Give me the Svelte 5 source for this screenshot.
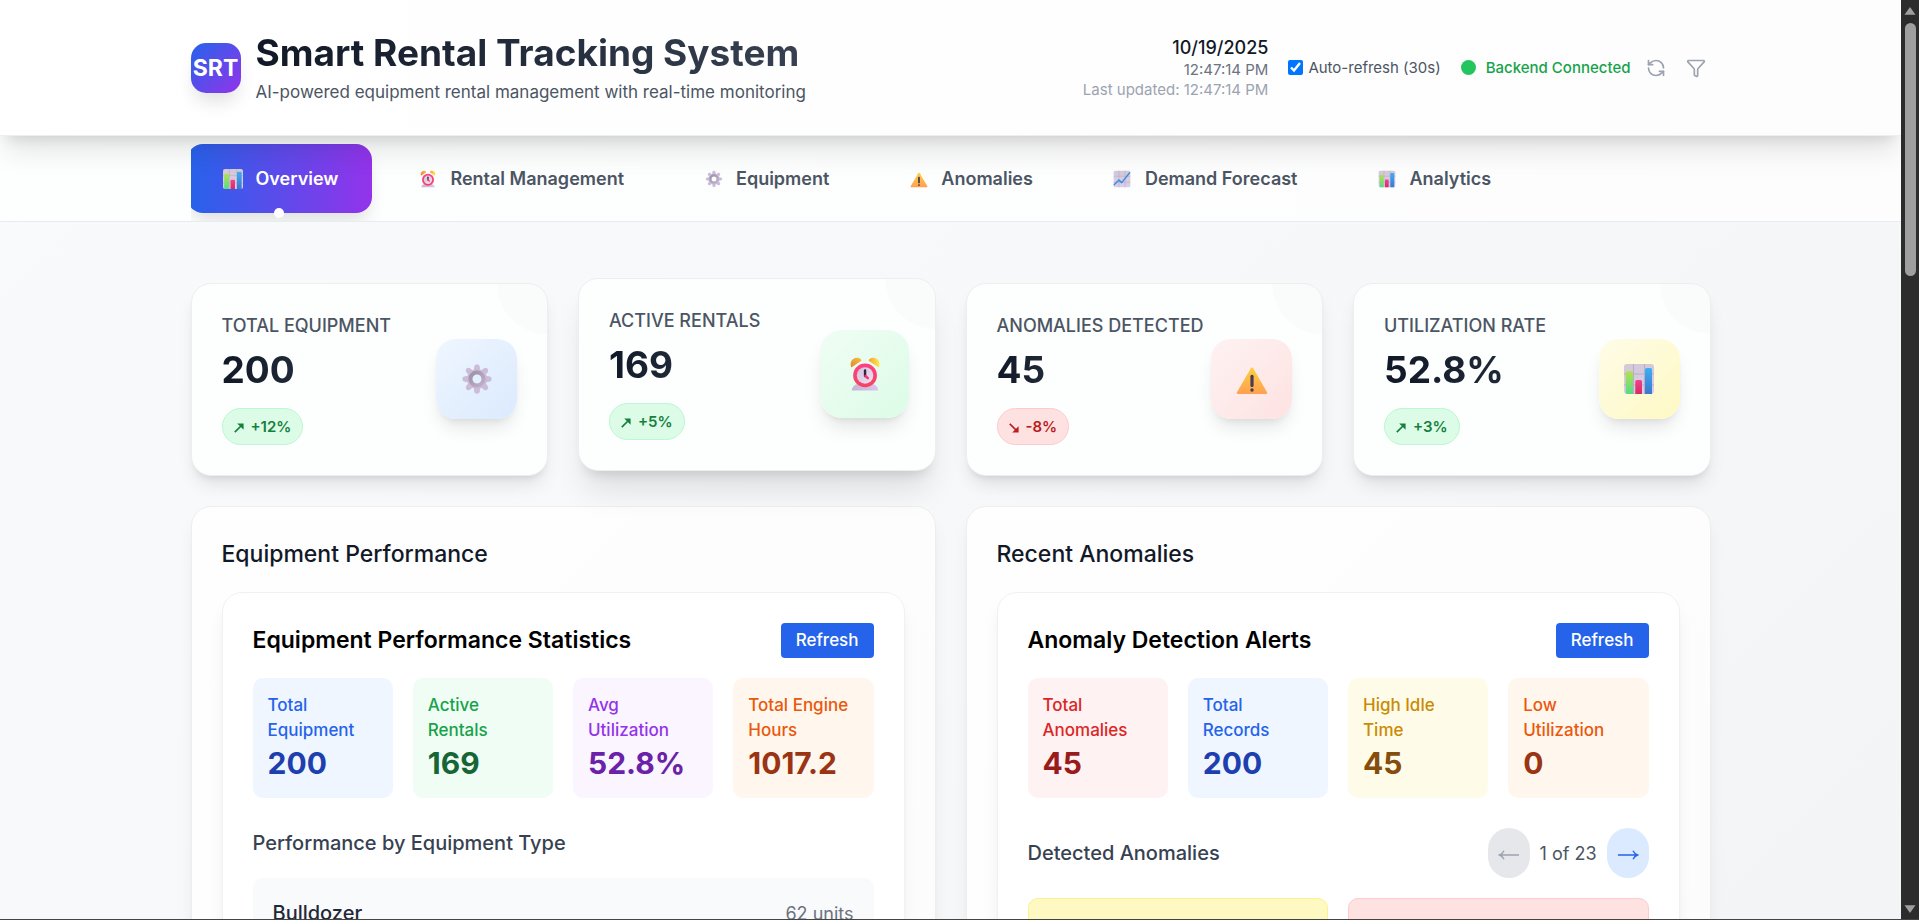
<script>
  const tabs = [
    { icon: 'bars', label: 'Overview' },
    { icon: 'clock', label: 'Rental Management' },
    { icon: 'gear', label: 'Equipment' },
    { icon: 'warning', label: 'Anomalies' },
    { icon: 'trend', label: 'Demand Forecast' },
    { icon: 'bars', label: 'Analytics' }
  ];
  let activeTab = $state('Overview');
  let autoRefresh = $state(true);

  const metrics = [
    { label: 'Total Equipment', value: '200', change: '+12%', up: true, icon: 'gear', tone: 'blue' },
    { label: 'Active Rentals', value: '169', change: '+5%', up: true, icon: 'clock', tone: 'green', raised: true },
    { label: 'Anomalies Detected', value: '45', change: '-8%', up: false, icon: 'warning', tone: 'red' },
    { label: 'Utilization Rate', value: '52.8%', change: '+3%', up: true, icon: 'bars', tone: 'yellow' }
  ];

  const performance = [
    { label: 'Total Equipment', value: '200', tone: 'blue' },
    { label: 'Active Rentals', value: '169', tone: 'green' },
    { label: 'Avg Utilization', value: '52.8%', tone: 'purple' },
    { label: 'Total Engine Hours', value: '1017.2', tone: 'orange' }
  ];

  const alerts = [
    { label: 'Total Anomalies', value: '45', tone: 'red' },
    { label: 'Total Records', value: '200', tone: 'blue' },
    { label: 'High Idle Time', value: '45', tone: 'yellow' },
    { label: 'Low Utilization', value: '0', tone: 'orange' }
  ];
</script>

{#snippet pictogram(name)}
  <svg class="pictogram" viewBox="0 0 36 36" aria-hidden="true">
    {#if name === 'bars' || name === 'trend'}
      <rect x="3" y="3" width="30" height="30" rx="3" fill="url(#paper)" />
      <path d="M12.5 3v30M23.5 3v30M3 13h30M3 24h30" stroke="#b9aec4" stroke-width="1.1" />
      {#if name === 'bars'}
        <path d="M4.7 12.3a2 2 0 0 1 2-2H10a2 2 0 0 1 2 2V33H6a1.3 1.3 0 0 1-1.3-1.3z" fill="url(#lime)" />
        <path d="M14.3 20.5a1.5 1.5 0 0 1 1.5-1.5h3.7a1.5 1.5 0 0 1 1.5 1.5V33h-6.7z" fill="url(#pink)" />
        <path d="M24 8.5A1.5 1.5 0 0 1 25.5 7h4A1.5 1.5 0 0 1 31 8.5V33h-7z" fill="url(#sky)" />
      {:else}
        <path d="M4 28.5L12.5 20l5 4.500L31.5 7" fill="none" stroke="#2f8fe0" stroke-width="2.6" stroke-linecap="round" stroke-linejoin="round" />
      {/if}
    {:else if name === 'gear'}
      {#each [0, 45, 90, 135, 180, 225, 270, 315] as angle}
        <path d="M14.8 10.500L15.2 5.800Q15.500 3.300 18 3.300Q20.500 3.300 20.800 5.800L21.200 10.500z" fill="url(#lilac)" transform="rotate({angle} 18 18)" />
      {/each}
      <circle cx="18" cy="18" r="7.600" fill="none" stroke="#cbbbd8" stroke-width="5" />
      <circle cx="18" cy="18" r="6.500" fill="none" stroke="url(#steel)" stroke-width="4" />
    {:else if name === 'clock'}
      <path d="M6.5 33q-.8 0-.5-1 1.500-5 6-5h12q4.500 0 6 5 .3 1-.5 1z" fill="url(#base)" />
      <path d="M5.5 12C3.500 7.500 6.500 3.500 10.500 3.300c2.500-.1 4.200 1.200 4.200 2.700z" fill="url(#bellLeft)" />
      <path d="M30.5 12C32.500 7.500 29.500 3.500 25.500 3.300c-2.500-.1-4.200 1.200-4.200 2.700z" fill="url(#bellRight)" />
      <circle cx="18" cy="19.300" r="10.800" fill="url(#rim)" />
      <circle cx="18" cy="19.300" r="7.500" fill="url(#face)" />
      <path d="M18 14.800v5" stroke="#33233f" stroke-width="2.200" stroke-linecap="round" />
      <path d="M18.300 19.800l2.200 2" stroke="#f5365f" stroke-width="2.200" stroke-linecap="round" />
    {:else}
      <path d="M16.700 7.600q1.300-2 2.600 0L33 31.200q.8 1.800-1 1.800H4q-1.800 0-1-1.800z" fill="url(#amber)" />
      <rect x="16.400" y="13.800" width="3.200" height="12.200" rx="1.500" fill="#4a3b52" />
      <circle cx="18" cy="29" r="1.700" fill="#4a3b52" />
    {/if}
  </svg>
{/snippet}

{#snippet tiles(items)}
  <div class="tiles">
    {#each items as item}
      <div class="tile {item.tone}">
        <p>{item.label}</p>
        <strong>{item.value}</strong>
      </div>
    {/each}
  </div>
{/snippet}

<svg class="defs" width="0" height="0" aria-hidden="true">
  <defs>
    <linearGradient id="paper" x1="0" y1="0" x2="0" y2="1"><stop offset="0" stop-color="#d3c9d8" /><stop offset="1" stop-color="#dccdec" /></linearGradient>
    <linearGradient id="lime" x1="0" y1="0" x2="0" y2="1"><stop offset="0" stop-color="#b5e04c" /><stop offset="1" stop-color="#55dc88" /></linearGradient>
    <linearGradient id="pink" x1="0" y1="0" x2="0" y2="1"><stop offset="0" stop-color="#f0438c" /><stop offset="1" stop-color="#d92a60" /></linearGradient>
    <linearGradient id="sky" x1="0" y1="0" x2="0" y2="1"><stop offset="0" stop-color="#3daef5" /><stop offset="1" stop-color="#3b78cf" /></linearGradient>
    <linearGradient id="lilac" x1="0" y1="0" x2="0" y2="1"><stop offset="0" stop-color="#ccbade" /><stop offset="1" stop-color="#cbbfd2" /></linearGradient>
    <linearGradient id="steel" x1="0" y1="0" x2="1" y2="1"><stop offset="0" stop-color="#9d92a4" /><stop offset="1" stop-color="#c0b0cc" /></linearGradient>
    <linearGradient id="base" x1="0" y1="0" x2="1" y2="0"><stop offset="0" stop-color="#c5b6d3" /><stop offset="1" stop-color="#dcc3f2" /></linearGradient>
    <linearGradient id="bellLeft" x1="0" y1="1" x2="1" y2="0"><stop offset="0" stop-color="#d98a35" /><stop offset="1" stop-color="#ffbd3c" /></linearGradient>
    <linearGradient id="bellRight" x1="0" y1="0" x2="1" y2="0"><stop offset="0" stop-color="#f5a33a" /><stop offset="1" stop-color="#ffe94c" /></linearGradient>
    <linearGradient id="rim" x1="0" y1="0" x2="0" y2="1"><stop offset="0" stop-color="#ff3f86" /><stop offset="1" stop-color="#f5455c" /></linearGradient>
    <linearGradient id="face" x1="0" y1="0" x2="1" y2="1"><stop offset="0" stop-color="#cfc3da" /><stop offset="1" stop-color="#f2def8" /></linearGradient>
    <linearGradient id="amber" x1="0" y1="0" x2="0" y2="1"><stop offset="0" stop-color="#fbd03f" /><stop offset="1" stop-color="#ffa052" /></linearGradient>
  </defs>
</svg>

<div class="window">
  <div class="page">
    <header>
      <div class="container topbar">
        <div class="brand">
          <div class="logo">SRT</div>
          <div>
            <h1>Smart Rental Tracking System</h1>
            <p>AI-powered equipment rental management with real-time monitoring</p>
          </div>
        </div>
        <div class="status">
          <div class="stamp">
            <span class="date">10/19/2025</span>
            <span class="time">12:47:14 PM</span>
            <span class="updated">Last updated: 12:47:14 PM</span>
          </div>
          <label class="auto">
            <input type="checkbox" bind:checked={autoRefresh} />
            Auto-refresh (30s)
          </label>
          <div class="backend"><i></i>Backend Connected</div>
          <div class="tools">
            <button aria-label="Refresh data">
              <svg viewBox="0 0 24 24"><path d="M21 12a9 9 0 0 0-9-9 9.750 9.750 0 0 0-6.740 2.740L3 8" /><path d="M3 3v5h5" /><path d="M3 12a9 9 0 0 0 9 9 9.750 9.750 0 0 0 6.740-2.740L21 16" /><path d="M16 16h5v5" /></svg>
            </button>
            <button aria-label="Filter">
              <svg viewBox="0 0 24 24"><path d="M10 20a1 1 0 0 0 .553.895l2 1A1 1 0 0 0 14 21v-7a2 2 0 0 1 .517-1.341L21.740 4.670A1 1 0 0 0 21 3H3a1 1 0 0 0-.742 1.670l7.225 7.989A2 2 0 0 1 10 14z" /></svg>
            </button>
          </div>
        </div>
      </div>
    </header>

    <nav>
      <div class="container">
        <div class="tabs">
          {#each tabs as tab}
            <button class:active={activeTab === tab.label} onclick={() => (activeTab = tab.label)}>
              <span class="tab-icon">{@render pictogram(tab.icon)}</span>
              <span>{tab.label}</span>
            </button>
          {/each}
        </div>
      </div>
    </nav>

    <main class="container">
      <section class="metrics">
        {#each metrics as metric}
          <article class="metric" class:raised={metric.raised}>
            <div>
              <h2>{metric.label}</h2>
              <p class="value">{metric.value}</p>
              <span class="badge" class:down={!metric.up}>
                <svg viewBox="0 0 10 10" aria-hidden="true">
                  {#if metric.up}
                    <path class="stem" d="M.8 9.200L7.500 2.500" /><path d="M3.200 .4H9.600V6.800L7.800 5 5 2.200z" />
                  {:else}
                    <path class="stem" d="M.8 .8L7.500 7.500" /><path d="M3.200 9.600H9.600V3.200L7.800 5 5 7.800z" />
                  {/if}
                </svg>
                {metric.change}
              </span>
            </div>
            <div class="metric-icon {metric.tone}">{@render pictogram(metric.icon)}</div>
          </article>
        {/each}
      </section>

      <section class="panels">
        <article class="panel">
          <h2>Equipment Performance</h2>
          <div class="inner">
            <div class="inner-head">
              <h3>Equipment Performance Statistics</h3>
              <button class="refresh">Refresh</button>
            </div>
            {@render tiles(performance)}
            <h4>Performance by Equipment Type</h4>
            <div class="type-row">
              <span class="type-name">Bulldozer</span>
              <span class="type-units">62 units</span>
            </div>
          </div>
        </article>

        <article class="panel">
          <h2>Recent Anomalies</h2>
          <div class="inner">
            <div class="inner-head">
              <h3>Anomaly Detection Alerts</h3>
              <button class="refresh">Refresh</button>
            </div>
            {@render tiles(alerts)}
            <div class="pager-row">
              <h4>Detected Anomalies</h4>
              <div class="pager">
                <button disabled aria-label="Previous page">
                  <svg viewBox="0 0 22 12"><path d="M21 6H1.500M6 1.800Q4.500 5 1.500 6 4.500 7 6 10.200" /></svg>
                </button>
                <span>1 of 23</span>
                <button aria-label="Next page">
                  <svg viewBox="0 0 22 12"><path d="M1 6h19.500M16 1.800Q17.500 5 20.500 6 17.500 7 16 10.200" /></svg>
                </button>
              </div>
            </div>
            <div class="alerts">
              <div class="alert yellow"></div>
              <div class="alert red"></div>
            </div>
          </div>
        </article>
      </section>
    </main>
  </div>

  <div class="scrollbar" aria-hidden="true">
    <svg viewBox="0 0 12 10"><path d="M6 1L11.500 8.800H.5z" /></svg>
    <div class="track"><div class="thumb"></div></div>
    <svg viewBox="0 0 12 10"><path d="M6 9L.5 1.200h11z" /></svg>
  </div>
</div>

<style>
  :global(body) {
    margin: 0;
    font-family: Inter, "Liberation Sans", sans-serif;
    color: #111827;
  }
  h1, h2, h3, h4, p { margin: 0; }
  button {
    font: inherit;
    border: 0;
    padding: 0;
    background: none;
    cursor: pointer;
  }
  .defs { position: absolute; }

  .window {
    display: flex;
    height: 100vh;
    box-sizing: border-box;
    overflow: hidden;
    border-bottom: 1px solid #444;
  }
  .page {
    flex: 1;
    min-width: 0;
    overflow: hidden;
    background: linear-gradient(135deg, #f8fafc, #f7f8fa 50%, #f3f4f6);
  }
  .container {
    max-width: 1520px;
    margin: 0 auto;
    padding: 0 40px;
  }

  header {
    position: relative;
    z-index: 2;
    background: linear-gradient(90deg, #fff, #fdfdfe);
    border-bottom: 1px solid #eceef0;
    box-shadow: 0 20px 26px -5px rgba(0, 0, 0, 0.1), 0 10px 12px -7px rgba(0, 0, 0, 0.1);
  }
  .topbar {
    display: flex;
    align-items: center;
    justify-content: space-between;
    padding-top: 30px;
    padding-bottom: 30px;
  }
  .brand {
    display: flex;
    align-items: center;
    gap: 15px;
  }
  .logo {
    display: grid;
    place-items: center;
    width: 50px;
    height: 50px;
    border-radius: 15px;
    background: linear-gradient(135deg, #2563eb, #9333ea);
    box-shadow: 0 12px 18px -4px rgba(0, 0, 0, 0.12);
    color: #fff;
    font-size: 23px;
    font-weight: 700;
  }
  h1 {
    font-size: 37px;
    line-height: 45px;
    font-weight: 700;
    background: linear-gradient(90deg, #111827, #374151);
    background-clip: text;
    color: transparent;
  }
  .brand p {
    margin-top: 5px;
    font-size: 17px;
    line-height: 25px;
    color: #4b5563;
  }
  .status {
    display: flex;
    align-items: center;
    gap: 20px;
    font-size: 15px;
    line-height: 20px;
  }
  .stamp {
    display: flex;
    flex-direction: column;
    text-align: right;
  }
  .date {
    font-size: 18px;
    line-height: 25px;
    font-weight: 500;
  }
  .time { color: #6b7280; }
  .updated { color: #9ca3af; }
  .auto {
    display: flex;
    align-items: center;
    gap: 5px;
    color: #4b5563;
  }
  .auto input {
    width: 15px;
    height: 15px;
    margin: 0;
    accent-color: #0075ff;
  }
  .backend {
    display: flex;
    align-items: center;
    gap: 10px;
    color: #16a34a;
    font-weight: 500;
  }
  .backend i {
    width: 15px;
    height: 15px;
    border-radius: 50%;
    background: #22c55e;
  }
  .tools {
    display: flex;
    gap: 10px;
    margin-left: -10px;
  }
  .tools button {
    display: flex;
    padding: 5px;
  }
  .tools svg {
    width: 20px;
    height: 20px;
    fill: none;
    stroke: #9ca3af;
    stroke-width: 2;
    stroke-linecap: round;
    stroke-linejoin: round;
  }

  nav {
    background: linear-gradient(90deg, #fdfefe, #fdfdfe);
    border-bottom: 1px solid #e8ebef;
  }
  .tabs {
    display: flex;
    gap: 17px;
    padding: 10px 0;
    overflow: hidden;
  }
  .tabs button {
    position: relative;
    z-index: 0;
    display: flex;
    align-items: center;
    gap: 10px;
    padding: 20px 30px;
    font-size: 18px;
    line-height: 25px;
    font-weight: 600;
    color: #4b5563;
    white-space: nowrap;
  }
  .tab-icon {
    display: grid;
    place-items: center;
    width: 25px;
  }
  .tab-icon :global(svg) {
    width: 20px;
    height: 20px;
  }
  .tabs .active { color: #fff; }
  .tabs .active :global(svg) {
    width: 24px;
    height: 24px;
  }
  .tabs .active::before {
    content: "";
    position: absolute;
    z-index: -1;
    inset: -2px -4px;
    border-radius: 16px;
    background: linear-gradient(90deg, #2563eb, #9333ea);
    box-shadow: 0 12px 18px -4px rgba(0, 0, 0, 0.12);
  }
  .tabs .active::after {
    content: "";
    position: absolute;
    left: calc(50% - 5px);
    bottom: -7px;
    width: 10px;
    height: 10px;
    border-radius: 50%;
    background: #fff;
  }

  main {
    display: grid;
    gap: 30px;
  }
  main.container {
    padding-top: 61px;
    padding-bottom: 40px;
  }
  .metrics {
    display: grid;
    grid-template-columns: repeat(4, 1fr);
    gap: 30px;
  }
  .metric {
    position: relative;
    display: flex;
    align-items: center;
    justify-content: space-between;
    overflow: hidden;
    padding: 29px 30px 30px;
    border: 1px solid #eceef0;
    border-radius: 20px;
    background: #fdfefe;
    box-shadow: 0 12px 18px -4px rgba(0, 0, 0, 0.1), 0 5px 7px -4px rgba(0, 0, 0, 0.1);
  }
  .metric::before {
    content: "";
    position: absolute;
    top: -50px;
    right: -50px;
    width: 100px;
    height: 100px;
    border-radius: 50%;
    background: rgba(0, 0, 0, 0.01);
  }
  .raised {
    transform: translateY(-5px);
    box-shadow: 0 25px 31px -6px rgba(0, 0, 0, 0.1), 0 10px 12px -7px rgba(0, 0, 0, 0.12);
  }
  .metric h2 {
    font-size: 18px;
    line-height: 25px;
    font-weight: 500;
    text-transform: uppercase;
    color: #4b5563;
  }
  .value {
    margin: 9px 0 15px;
    width: max-content;
    font-size: 37px;
    line-height: 46px;
    font-weight: 700;
    background: linear-gradient(90deg, #111827, #1f2937);
    background-clip: text;
    color: transparent;
  }
  .badge {
    display: flex;
    align-items: center;
    gap: 7px;
    width: max-content;
    padding: 7px 11px;
    border: 1px solid #bbf7d0;
    border-radius: 20px;
    background: #dcfce7;
    color: #15803d;
    font-size: 15px;
    line-height: 21px;
    font-weight: 600;
  }
  .badge svg {
    width: 10px;
    height: 10px;
    margin-top: 2px;
    fill: currentColor;
  }
  .stem {
    stroke: currentColor;
    stroke-width: 1.7;
  }
  .badge.down {
    border-color: #fecaca;
    background: #fee2e2;
    color: #b91c1c;
  }
  .metric-icon {
    position: absolute;
    right: 30px;
    display: grid;
    place-items: center;
    width: 81px;
    height: 80px;
    border-radius: 20px;
    box-shadow: 0 12px 18px -4px rgba(0, 0, 0, 0.1), 0 5px 7px -4px rgba(0, 0, 0, 0.08);
  }
  .metric-icon :global(svg) {
    width: 36px;
    height: 36px;
  }
  .raised .metric-icon { transform: scale(1.1); }
  .metric-icon.blue { background: linear-gradient(135deg, #eff6ff, #dbeafe); }
  .metric-icon.green { background: linear-gradient(135deg, #f0fdf4, #dcfce7); }
  .metric-icon.red { background: linear-gradient(135deg, #fef2f2, #fee2e2); }
  .metric-icon.yellow { background: linear-gradient(135deg, #fefce8, #fef9c3); }

  .panels {
    display: grid;
    grid-template-columns: repeat(2, 1fr);
    gap: 30px;
  }
  .panel {
    padding: 30px;
    border: 1px solid #eceef0;
    border-radius: 20px;
    background: linear-gradient(135deg, #fefefe, #fcfcfd);
    box-shadow: 0 12px 18px -4px rgba(0, 0, 0, 0.08), 0 5px 7px -4px rgba(0, 0, 0, 0.06);
  }
  .panel h2 {
    margin-bottom: 20px;
    font-size: 23px;
    line-height: 35px;
    font-weight: 500;
  }
  .inner {
    padding: 30px;
    border: 1px solid #f0f1f3;
    border-radius: 20px;
    background: #fff;
    box-shadow: 0 12px 18px -4px rgba(0, 0, 0, 0.08), 0 5px 7px -4px rgba(0, 0, 0, 0.06);
  }
  .inner-head {
    display: flex;
    align-items: center;
    justify-content: space-between;
    margin-bottom: 20px;
  }
  h3 {
    font-size: 23px;
    line-height: 35px;
    font-weight: 600;
    color: #000;
  }
  .refresh {
    padding: 5px 15px;
    border-radius: 4px;
    background: #2563eb;
    color: #fff;
    font-size: 17px;
    line-height: 25px;
    font-weight: 500;
  }
  .tiles {
    display: grid;
    grid-template-columns: repeat(4, 1fr);
    gap: 20px;
    margin-bottom: 30px;
  }
  .tile {
    padding: 15px;
    border-radius: 10px;
  }
  .tile p {
    font-size: 17px;
    line-height: 25px;
    font-weight: 500;
  }
  .tile strong {
    display: block;
    font-size: 30px;
    line-height: 40px;
    font-weight: 700;
  }
  .tile.blue { background: #eff6ff; color: #2563eb; }
  .tile.blue strong { color: #1e40af; }
  .tile.green { background: #f0fdf4; color: #16a34a; }
  .tile.green strong { color: #166534; }
  .tile.purple { background: #faf5ff; color: #9333ea; }
  .tile.purple strong { color: #6b21a8; }
  .tile.orange { background: #fff7ed; color: #ea580c; }
  .tile.orange strong { color: #9a3412; }
  .tile.red { background: #fef2f2; color: #dc2626; }
  .tile.red strong { color: #991b1b; }
  .tile.yellow { background: #fefce8; color: #ca8a04; }
  .tile.yellow strong { color: #854d0e; }
  h4 {
    font-size: 20px;
    line-height: 30px;
    font-weight: 500;
    color: #374151;
  }
  .type-row {
    display: flex;
    align-items: center;
    justify-content: space-between;
    margin-top: 20px;
    padding: 20px;
    border-radius: 10px;
    background: #f9fafb;
  }
  .type-name {
    font-size: 20px;
    line-height: 30px;
    font-weight: 500;
    color: #1f2937;
  }
  .type-units {
    font-size: 18px;
    line-height: 25px;
    color: #6b7280;
  }
  .pager-row {
    display: flex;
    align-items: center;
    justify-content: space-between;
    margin-bottom: 20px;
  }
  .pager {
    display: flex;
    align-items: center;
    gap: 10px;
    color: #4b5563;
    font-size: 18px;
  }
  .pager button {
    display: grid;
    place-items: center;
    width: 42px;
    height: 50px;
    border-radius: 21px;
    background: #dbeafe;
    color: #2563eb;
  }
  .pager button:disabled {
    background: #e5e7eb;
    color: #9ca3af;
  }
  .pager svg {
    width: 22px;
    height: 12px;
    margin-top: 3px;
    fill: none;
    stroke: currentColor;
    stroke-width: 1.4;
  }
  .alerts {
    display: grid;
    grid-template-columns: repeat(2, 1fr);
    gap: 20px;
  }
  .alert {
    min-height: 120px;
    border: 1px solid;
    border-radius: 10px;
  }
  .alert.yellow { background: #fef9c3; border-color: #fef08a; }
  .alert.red { background: #fee2e2; border-color: #fecaca; }

  .scrollbar {
    flex: none;
    display: flex;
    flex-direction: column;
    align-items: center;
    width: 18px;
    padding: 5px 0 4px;
    box-sizing: border-box;
    background: #2c2c2c;
  }
  .scrollbar svg {
    width: 12px;
    height: 12px;
    fill: #9f9f9f;
  }
  .track {
    flex: 1;
    width: 11px;
    padding: 6px 0;
  }
  .thumb {
    height: 29%;
    border-radius: 6px;
    background: #9f9f9f;
  }
</style>
